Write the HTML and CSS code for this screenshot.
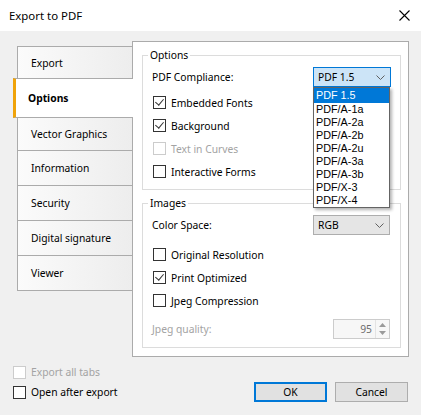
FILE: index.html
```html
<!DOCTYPE html>
<html lang="en">
<head>
<meta charset="utf-8">
<title>Export to PDF</title>
<link rel="stylesheet" href="styles.css">
</head>
<body>
<div class="window">
  <header class="titlebar">
    <span class="title">Export to PDF</span>
    <svg class="close" width="11" height="11" viewBox="0 0 11 11" aria-label="Close">
      <path d="M0.5 0.5 L10.5 10.5 M10.5 0.5 L0.5 10.5" stroke="#000" stroke-width="1.1" fill="none"/>
    </svg>
  </header>

  <div class="main">
    <nav class="tabs">
      <div class="tab">Export</div>
      <div class="tab active">Options</div>
      <div class="tab">Vector Graphics</div>
      <div class="tab">Information</div>
      <div class="tab">Security</div>
      <div class="tab">Digital signature</div>
      <div class="tab last">Viewer</div>
    </nav>

    <section class="panel">
      <fieldset class="group">
        <legend>Options</legend>
        <div class="field">
          <span>PDF Compliance:</span>
          <div class="combo open wide">
            <span>PDF 1.5</span>
            <svg class="chev" width="9" height="5" viewBox="0 0 9 5"><polyline points="0.5,0.5 4.5,4.5 8.5,0.5" fill="none" stroke="#606060" stroke-width="1"/></svg>
            <ul class="droplist">
              <li class="sel">PDF 1.5</li>
              <li>PDF/A-1a</li>
              <li>PDF/A-2a</li>
              <li>PDF/A-2b</li>
              <li>PDF/A-2u</li>
              <li>PDF/A-3a</li>
              <li>PDF/A-3b</li>
              <li>PDF/X-3</li>
              <li>PDF/X-4</li>
            </ul>
          </div>
        </div>
        <div class="checks first">
          <label class="check"><span class="box on"></span>Embedded Fonts</label>
          <label class="check"><span class="box on"></span>Background</label>
          <label class="check disabled"><span class="box"></span>Text in Curves</label>
          <label class="check"><span class="box"></span>Interactive Forms</label>
        </div>
      </fieldset>

      <fieldset class="group images">
        <legend>Images</legend>
        <div class="field">
          <span>Color Space:</span>
          <div class="combo">
            <span>RGB</span>
            <svg class="chev" width="9" height="5" viewBox="0 0 9 5"><polyline points="0.5,0.5 4.5,4.5 8.5,0.5" fill="none" stroke="#606060" stroke-width="1"/></svg>
          </div>
        </div>
        <div class="checks spaced">
          <label class="check"><span class="box"></span>Original Resolution</label>
          <label class="check"><span class="box on"></span>Print Optimized</label>
          <label class="check"><span class="box"></span>Jpeg Compression</label>
        </div>
        <div class="field quality">
          <span class="muted">Jpeg quality:</span>
          <div class="spin">
            <span class="value">95</span>
            <span class="arrows">
              <svg width="7" height="4" viewBox="0 0 7 4"><polygon points="0,4 3.5,0 7,4" fill="#9a9a9a"/></svg>
              <svg width="7" height="4" viewBox="0 0 7 4"><polygon points="0,0 3.5,4 7,0" fill="#9a9a9a"/></svg>
            </span>
          </div>
        </div>
      </fieldset>
    </section>
  </div>

  <footer class="footer">
    <div class="footer-checks">
      <label class="check disabled"><span class="box"></span>Export all tabs</label>
      <label class="check"><span class="box"></span>Open after export</label>
    </div>
    <div class="buttons">
      <button class="btn default">OK</button>
      <button class="btn">Cancel</button>
    </div>
  </footer>
</div>
</body>
</html>
```

FILE: styles.css
```css
* {
  box-sizing: border-box;
}

html, body {
  margin: 0;
  padding: 0;
}

body {
  width: 421px;
  height: 415px;
  overflow: hidden;
  background: #f0f0f0;
  font-family: "Noto Sans", "Open Sans", sans-serif;
  font-size: 10.3px;
  color: #000;
}

.window {
  width: 421px;
  height: 415px;
  display: flex;
  flex-direction: column;
}

/* title bar */
.titlebar {
  height: 31px;
  background: #fff;
  display: flex;
  align-items: center;
  justify-content: space-between;
  padding: 0 11px 0 9px;
  flex: none;
}

.title {
  font-size: 11.4px;
  line-height: 16px;
}

.close {
  display: block;
}

/* tabs + page */
.main {
  display: flex;
  align-items: flex-start;
  padding: 10px 0 0 17px;
}

.tabs {
  width: 116px;
  margin-top: 5px;
  position: relative;
  z-index: 1;
  flex: none;
}

.tab {
  height: 35px;
  display: flex;
  align-items: center;
  padding-left: 13px;
  border: 1px solid #ababab;
  border-bottom: none;
  background: linear-gradient(to right, #fbfbfb, #ededed);
  line-height: 14px;
}

.tab:first-child {
  height: 32px;
}

.tab.last {
  height: 36px;
  border-bottom: 1px solid #ababab;
}

.tab.active {
  height: 40px;
  width: 120px;
  margin-left: -4px;
  padding-left: 12px;
  border-left: 3px solid #f0a30a;
  border-right: none;
  border-bottom: 1px solid #ababab;
  background: #fff;
  font-weight: bold;
}

.tab.active + .tab {
  border-top: none;
  height: 32px;
}

.panel {
  width: 277px;
  margin-left: -1px;
  background: #fff;
  border: 1px solid #ababab;
  padding: 0 7px 8px 9px;
  flex: none;
}

/* group boxes */
.group {
  margin: 5px 0 0;
  padding: 4px 9px 6px;
  border: 1px solid #dcdcdc;
  min-width: 0;
}

.group.images {
  padding-bottom: 8px;
}

.group legend {
  padding: 0 2px;
  margin-left: -4px;
  line-height: 16px;
}

.field {
  height: 20px;
  display: flex;
  align-items: center;
  justify-content: space-between;
}

.field.quality {
  margin-top: 7px;
}

.muted {
  color: #a3a3a3;
}

.combo {
  position: relative;
  width: 77px;
  height: 20px;
  margin-right: 1px;
  display: flex;
  align-items: center;
  justify-content: space-between;
  padding: 0 5px 0 4px;
  background: #e5e5e5;
  border: 1px solid #adadad;
}

.combo.wide {
  width: 78px;
  margin-right: 0;
}

.combo.open {
  background: #cce4f7;
  border-color: #0078d7;
}

.chev {
  display: block;
}

.droplist {
  position: absolute;
  top: calc(100% + 1px);
  left: -1px;
  width: 77px;
  margin: 0;
  padding: 0;
  list-style: none;
  background: #fff;
  border: 1px solid #646464;
  box-shadow: 2px 2px 3px rgba(0, 0, 0, 0.3);
  z-index: 5;
  font-family: "Liberation Sans", Arial, sans-serif;
  font-size: 10.8px;
}

.droplist li {
  height: 13px;
  line-height: 13px;
  padding-left: 2px;
  white-space: nowrap;
}

.droplist li.sel {
  height: 15px;
  line-height: 15px;
  background: #0078d7;
  color: #fff;
}

/* check boxes */
.checks {
  display: flex;
  flex-direction: column;
}

.checks.first {
  margin-top: 4px;
}

.checks.spaced {
  margin-top: 8px;
}

.check {
  height: 23px;
  display: flex;
  align-items: center;
  gap: 5px;
  padding-left: 1px;
}

.box {
  width: 13px;
  height: 13px;
  border: 1px solid #333;
  background: #fff;
  position: relative;
  flex: none;
}

.box.on::after {
  content: "";
  position: absolute;
  left: 3px;
  top: 0px;
  width: 4px;
  height: 7px;
  border-right: 1px solid #333;
  border-bottom: 1px solid #333;
  transform: rotate(40deg);
}

.check.disabled {
  color: #a3a3a3;
}

.check.disabled .box {
  border-color: #cccccc;
}

/* numeric spinner */
.spin {
  width: 57px;
  height: 20px;
  margin-right: 1px;
  display: flex;
  align-items: stretch;
  border: 1px solid #cccccc;
  background: #f7f7f7;
}

.spin .value {
  flex: 1;
  display: flex;
  align-items: center;
  justify-content: flex-end;
  padding-right: 3px;
  color: #6d6d6d;
}

.spin .arrows {
  width: 14px;
  display: flex;
  flex-direction: column;
  align-items: center;
  justify-content: space-evenly;
  border-left: 1px solid #e3e3e3;
}

.spin .arrows svg {
  display: block;
}

/* footer */
.footer {
  display: flex;
  justify-content: space-between;
  align-items: flex-end;
  padding: 0 13px 0 13px;
  margin-top: 5px;
}

.footer .check {
  height: 20px;
  padding-left: 0;
}

.buttons {
  display: flex;
  gap: 8px;
}

.btn {
  width: 73px;
  height: 20px;
  padding: 0;
  font: inherit;
  color: #000;
  background: #e1e1e1;
  border: 1px solid #adadad;
}

.btn.default {
  border: 2px solid #0078d7;
}
```
